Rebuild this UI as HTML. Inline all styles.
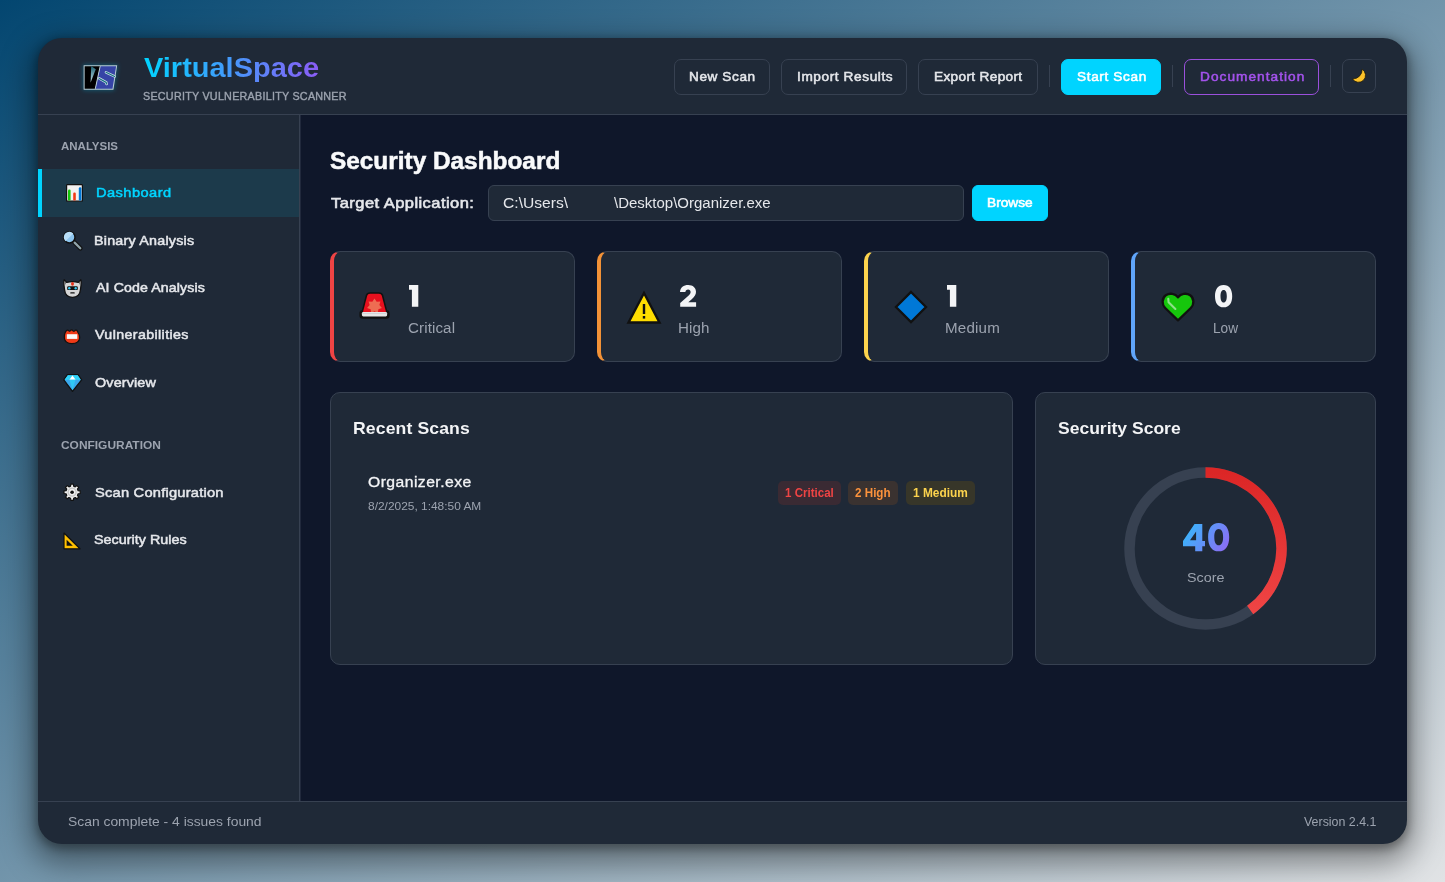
<!DOCTYPE html>
<html><head><meta charset="utf-8">
<style>
html,body{margin:0;padding:0;width:1445px;height:882px;overflow:hidden}
body{background:linear-gradient(to bottom right,#034670 0%,#e1e3e5 100%);font-family:"Liberation Sans",sans-serif;position:relative}
.t{position:absolute;white-space:pre;line-height:1;transform-origin:0 0;font-family:"Liberation Sans",sans-serif}
.abs{position:absolute}
#win{position:absolute;left:38px;top:38px;width:1369px;height:806px;border-radius:24px;background:#1f2937;box-shadow:0 12px 30px 8px rgba(0,0,0,.4),0 3px 8px 2px rgba(0,0,0,.3);overflow:hidden}
#hdr-b{position:absolute;left:38px;top:114px;width:1369px;height:1px;background:#374151}
#side-b{position:absolute;left:299px;top:115px;width:1px;height:686px;background:#374151;box-shadow:1px 0 0 rgba(55,65,81,.45)}
#main{position:absolute;left:300px;top:115px;width:1107px;height:686px;background:#0f172a}
#foot-b{position:absolute;left:38px;top:801px;width:1369px;height:1px;background:#374151}
.btn{position:absolute;box-sizing:border-box;border:1px solid #374151;border-radius:7px;background:#1f2937}
.sep{position:absolute;width:1px;height:22px;top:65px;background:#374151}
.card{position:absolute;box-sizing:border-box;border:1px solid #374151;border-radius:10px;background:#1f2937}
.sc{position:absolute;box-sizing:border-box;border:1px solid #374151;border-left-width:4px;border-radius:10px;background:#1f2937}
.sc .bar{position:absolute;left:0;top:0;bottom:0;width:4px}
.badge{position:absolute;top:481px;height:24px;border-radius:5px}
svg{position:absolute;overflow:visible}
</style></head><body>
<div id="win"></div>
<div id="main"></div>
<div id="hdr-b"></div>
<div id="side-b"></div>
<div id="foot-b"></div>

<!-- logo -->
<svg style="left:83px;top:64px" width="35" height="27" viewBox="0 0 35 27">
  <defs><filter id="glow" x="-50%" y="-50%" width="200%" height="200%"><feGaussianBlur stdDeviation="2"/></filter>
  <linearGradient id="slg" x1="0" y1="0" x2="0" y2="1"><stop offset="0" stop-color="#1a6070"/><stop offset="1" stop-color="#c8e4ea"/></linearGradient></defs>
  <path d="M0,0.5 L35,0.5 L31,26.5 L0,26.5 Z" fill="#0ab0d8" opacity=".35" filter="url(#glow)"/>
  <path d="M0.6,1.2 L34.2,1.2 L30.4,25.8 L0.6,25.8 Z" fill="#b9cdd4"/>
  <path d="M1.6,2.2 L17.2,2.2 L12.3,24.8 L1.6,24.8 Z" fill="#000"/>
  <path d="M17.2,2.2 L33.1,2.2 L29.5,24.8 L12.3,24.8 Z" fill="#3644a6"/>
  <path d="M17.2,2.2 L12.3,24.8" stroke="#b9cdd4" stroke-width="1"/>
  <path d="M8.2,2 L12.8,5.3 L7.6,18.5 Z" fill="url(#slg)"/>
  <path d="M23,8.3 L31.6,12.4" stroke="#cfe0e6" stroke-width="2.6" stroke-linecap="round"/>
  <path d="M23,8.3 L31.6,12.4" stroke="#157080" stroke-width="1.1" stroke-linecap="round"/>
  <path d="M16.2,14.4 L23.2,18.4 L23.6,20" stroke="#cfe0e6" stroke-width="2.6" stroke-linecap="round" fill="none"/>
  <path d="M16.2,14.4 L23.2,18.4 L23.6,20" stroke="#157080" stroke-width="1.1" stroke-linecap="round" fill="none"/>
</svg>

<!-- header buttons -->
<div class="btn" style="left:674px;top:59px;width:96px;height:36px"></div>
<div class="btn" style="left:781px;top:59px;width:126px;height:36px"></div>
<div class="btn" style="left:918px;top:59px;width:120px;height:36px"></div>
<div class="sep" style="left:1049px"></div>
<div class="btn" style="left:1061px;top:59px;width:100px;height:36px;background:#00d4ff;border-color:#00d4ff"></div>
<div class="sep" style="left:1172px"></div>
<div class="btn" style="left:1184px;top:59px;width:135px;height:36px;border:1.5px solid #9b50dc"></div>
<div class="sep" style="left:1330px"></div>
<div class="btn" style="left:1342px;top:59px;width:34px;height:34px"></div>
<!-- moon -->
<svg style="left:1350px;top:67px" width="18" height="18" viewBox="0 0 18 18">
  <path d="M12.2,2.3 A7,7 0 1 1 2.6,12 A9.5,9.5 0 0 0 12.2,2.3 Z" fill="#fcc22a" stroke="#1a1400" stroke-width=".7" stroke-linejoin="round"/>
</svg>

<!-- sidebar active -->
<div class="abs" style="left:38px;top:169px;width:261px;height:48px;background:#1c3a4b"></div>
<div class="abs" style="left:38.3px;top:169px;width:3.6px;height:48px;background:#00d4ff"></div>

<!-- sidebar icons -->
<!-- bar chart -->
<svg style="left:66px;top:184px" width="17" height="18" viewBox="0 0 17 18">
  <rect x=".6" y=".6" width="15.8" height="16.6" rx=".8" fill="#f2f2f2" stroke="#111" stroke-width="1.2"/>
  <rect x="2" y="5.6" width="2.6" height="11" rx="1.2" fill="#16c60c"/>
  <rect x="7.2" y="8.6" width="2.6" height="8" rx="1.2" fill="#f03a17"/>
  <rect x="12.8" y="3.2" width="2.6" height="13.4" rx="1.2" fill="#0078d7"/>
</svg>
<!-- magnifier -->
<svg style="left:62px;top:230px" width="21" height="21" viewBox="0 0 21 21">
  <path d="M12.3,12.3 L18.4,18.4" stroke="#111" stroke-width="4.4" stroke-linecap="round"/>
  <path d="M12.6,12.6 L18.3,18.3" stroke="#8fa3aa" stroke-width="2.2" stroke-linecap="round"/>
  <circle cx="7.4" cy="7.3" r="5.6" fill="#8cc4ee" stroke="#111" stroke-width="1.5"/>
  <path d="M3.4,11.2 A5,5 0 0 1 11.3,3.4 Z" fill="#b8def8"/>
</svg>
<!-- robot -->
<svg style="left:63px;top:279px" width="19" height="19" viewBox="0 0 19 19">
  <path d="M1.2,0.8 L3.6,3.4 Q9.5,1.9 15.4,3.4 L17.8,0.8 Q18.6,2.5 18,6.5 L17.4,11 Q16.8,18 9.5,18.3 Q2.2,18 1.6,11 L1,6.5 Q0.4,2.5 1.2,0.8 Z" fill="#d6d6d6" stroke="#111" stroke-width="1.3" stroke-linejoin="round"/>
  <path d="M1.6,1.8 L3,3.6 L2.2,6 Z M17.4,1.8 L16,3.6 L16.8,6 Z" fill="#555"/>
  <ellipse cx="9.5" cy="4.8" rx="1.5" ry="1.9" fill="#e83018"/>
  <rect x="4.2" y="7.3" width="10.6" height="3.8" rx="1.2" fill="#111"/>
  <circle cx="6.3" cy="9.2" r="1.2" fill="#35c8f5"/>
  <circle cx="12.7" cy="9.2" r="1.2" fill="#35c8f5"/>
  <rect x="7.2" y="13.2" width="4.6" height="1.4" rx=".7" fill="#111"/>
</svg>
<!-- name badge -->
<svg style="left:63px;top:328px" width="18" height="16" viewBox="0 0 18 16">
  <path d="M2.2,4.5 Q3.5,1.5 5.2,2.3 Q6.2,4 7.4,2.6 Q8.6,1 9.8,2.6 Q11,4 12.2,2.3 Q13.8,1.2 15,4.5 Q17.2,7.5 16.7,10 Q16,15.5 9,15.6 Q2,15.5 1.3,10 Q1,7 2.2,4.5 Z" fill="#f03a17" stroke="#111" stroke-width="1.2"/>
  <rect x="3.8" y="6.2" width="10.5" height="4.7" fill="#f8f8f8"/>
</svg>
<!-- gem -->
<svg style="left:63px;top:374px" width="19" height="18" viewBox="0 0 19 18">
  <path d="M4.5,0.7 L15,0.7 L18.6,5.8 L9.5,17.3 L0.8,5.8 Z" fill="#3aa8ec" stroke="#111" stroke-width="1.3" stroke-linejoin="round"/>
  <path d="M4.8,1.3 L14.7,1.3 L17.8,5.8 L1.6,5.8 Z" fill="#30d4fa"/>
  <path d="M9.5,1.6 L12.6,5.8 L6.4,5.8 Z" fill="#fff"/>
  <path d="M6.5,5.8 L12.5,5.8 L9.5,16.3 Z" fill="#30c8f5"/>
</svg>
<!-- gear -->
<svg style="left:63px;top:483px" width="18" height="18" viewBox="-9.1 -9.2 18 18">
  <path d="M-1.28,-8.10 L1.28,-8.10 L1.54,-6.01 L3.16,-5.34 L4.82,-6.63 L6.63,-4.82 L5.34,-3.16 L6.01,-1.54 L8.10,-1.28 L8.10,1.28 L6.01,1.54 L5.34,3.16 L6.63,4.82 L4.82,6.63 L3.16,5.34 L1.54,6.01 L1.28,8.10 L-1.28,8.10 L-1.54,6.01 L-3.16,5.34 L-4.82,6.63 L-6.63,4.82 L-5.34,3.16 L-6.01,1.54 L-8.10,1.28 L-8.10,-1.28 L-6.01,-1.54 L-5.34,-3.16 L-6.63,-4.82 L-4.82,-6.63 L-3.16,-5.34 L-1.54,-6.01 Z" fill="#eeeeee" stroke="#111" stroke-width="1.2" stroke-linejoin="round"/>
  <circle r="4" fill="none" stroke="#c4c4c4" stroke-width="1.2"/>
  <circle r="1.8" fill="#111"/>
</svg>
<!-- triangle ruler -->
<svg style="left:63px;top:532px" width="18" height="18" viewBox="0 0 18 18">
  <path d="M1,1 L17,16.8 L1,16.8 Z" fill="#ffc000" stroke="#111" stroke-width="1.2" stroke-linejoin="round"/>
  <path d="M3.6,7.8 L9.8,13.8 L3.6,13.8 Z" fill="#111"/>
</svg>

<!-- main: input + browse -->
<div class="btn" style="left:488px;top:185px;width:476px;height:36px;border-radius:6px"></div>
<div class="btn" style="left:972px;top:185px;width:76px;height:36px;background:#00d4ff;border-color:#00d4ff;border-radius:6px"></div>

<!-- stat cards -->
<div class="sc" style="left:330px;top:251px;width:245px;height:111px;border-left-color:#ef4444"></div>
<div class="sc" style="left:597px;top:251px;width:245px;height:111px;border-left-color:#f39237"></div>
<div class="sc" style="left:864px;top:251px;width:245px;height:111px;border-left-color:#fcd34d"></div>
<div class="sc" style="left:1131px;top:251px;width:245px;height:111px;border-left-color:#60a5fa"></div>

<!-- siren -->
<svg style="left:360px;top:292px" width="29" height="27" viewBox="0 0 29 27">
  <defs><clipPath id="domeclip"><path d="M7.2,3.8 Q7.8,1.8 10,1.8 L19,1.8 Q21.2,1.8 21.8,3.8 L26,20 L3,20 Z"/></clipPath></defs>
  <path d="M7.2,3.8 Q7.8,1.8 10,1.8 L19,1.8 Q21.2,1.8 21.8,3.8 L25.8,19.6 L26.6,19.6 Q28,19.8 28,21.4 L28,23.6 Q28,25.2 26.4,25.2 L2.6,25.2 Q1,25.2 1,23.6 L1,21.4 Q1,19.8 2.4,19.6 L3.2,19.6 Z" fill="#111" stroke="#111" stroke-width="3.2" stroke-linejoin="round"/>
  <path d="M7.2,3.8 Q7.8,1.8 10,1.8 L19,1.8 Q21.2,1.8 21.8,3.8 L26,20 L3,20 Z" fill="#e8101e"/>
  <path d="M14.50,6.60 L16.67,9.70 L20.44,9.46 L19.37,13.09 L21.91,15.89 L18.41,17.32 L17.80,21.05 L14.50,19.20 L11.20,21.05 L10.59,17.32 L7.09,15.89 L9.63,13.09 L8.56,9.46 L12.33,9.70 Z" fill="#ee6c52" clip-path="url(#domeclip)"/>
  <rect x="1.9" y="19.9" width="25.2" height="4.5" rx="1.4" fill="#e6e6e6"/>
  <rect x="2.2" y="21.3" width="24.6" height=".7" fill="#c9cdd0"/>
</svg>
<!-- warning -->
<svg style="left:627px;top:291px" width="34" height="33" viewBox="0 0 34 33">
  <path d="M17,2 L32.5,31.5 L1.5,31.5 Z" fill="#ffdd00" stroke="#111" stroke-width="2.4" stroke-linejoin="miter"/>
  <rect x="15.8" y="13" width="2.4" height="10" fill="#111"/>
  <rect x="15.8" y="25" width="2.4" height="2.6" fill="#111"/>
</svg>
<!-- blue diamond -->
<svg style="left:894px;top:290px" width="34" height="34" viewBox="0 0 34 34">
  <path d="M17,2 L32,17 L17,32 L2,17 Z" fill="#0078d7" stroke="#111" stroke-width="2.4"/>
</svg>
<!-- green heart -->
<svg style="left:1161px;top:292px" width="34" height="30" viewBox="0 0 34 30">
  <path d="M17,28.3 L4.2,16 C0.6,12.4 0.8,6.2 4.8,3.3 C8.8,0.6 14.2,1.6 17,5.3 C19.8,1.6 25.2,0.6 29.2,3.3 C33.2,6.2 33.4,12.4 29.8,16 Z" fill="#16c60c" stroke="#111" stroke-width="2.3" stroke-linejoin="round"/>
  <path d="M7.3,6.8 L7.6,10.3 L14.4,17" stroke="#8ee08a" stroke-width="2.1" fill="none" stroke-linecap="round" stroke-linejoin="round"/>
</svg>

<!-- recent scans & score cards -->
<div class="card" style="left:330px;top:392px;width:683px;height:273px"></div>
<div class="card" style="left:1035px;top:392px;width:341px;height:273px"></div>
<div class="badge" style="left:778px;width:63px;background:#3a2a33"></div>
<div class="badge" style="left:848px;width:50px;background:#3a3230"></div>
<div class="badge" style="left:906px;width:69px;background:#373629"></div>

<!-- score ring -->
<svg style="left:1124px;top:467px" width="163" height="163" viewBox="0 0 163 163">
  <defs><linearGradient id="rg" gradientUnits="userSpaceOnUse" x1="0" y1="5" x2="0" y2="143"><stop offset="0" stop-color="#dc2626"/><stop offset="1" stop-color="#ef4444"/></linearGradient></defs>
  <circle cx="81.5" cy="81.5" r="76" fill="none" stroke="#374151" stroke-width="10.5"/>
  <path d="M81.5,5.5 A76,76 0 0 1 126.17,142.98" fill="none" stroke="url(#rg)" stroke-width="10.5"/>
</svg>

<!-- digits -->
<svg style="left:408.5px;top:285px" width="10" height="22" viewBox="0 0 10 22"><path d="M0,0.1 L9.3,0.1 L9.3,21.8 L2.9,21.8 L2.9,4.8 L0,4.8 Z" fill="#f3f4f6"/></svg>
<svg style="left:680px;top:285px" width="17" height="22" viewBox="0 0 17 22"><path d="M0,7 C0.3,2.5 3.6,0 8.2,0 C13,0 16,2.9 16,6.8 C16,9.5 14.6,11.6 12,14 L8.3,17.2 L16.1,17.2 L16.1,21.8 L0.2,21.8 L0.2,17.9 L8.4,10.8 C10,9.4 10.6,8.3 10.6,7.1 C10.6,5.4 9.6,4.5 8.1,4.5 C6.5,4.5 5.5,5.5 5.4,7 Z" fill="#f3f4f6"/></svg>
<svg style="left:946.6px;top:285px" width="10" height="22" viewBox="0 0 10 22"><path d="M0,0.1 L9.3,0.1 L9.3,21.8 L2.9,21.8 L2.9,4.8 L0,4.8 Z" fill="#f3f4f6"/></svg>
<svg style="left:1214.7px;top:284.7px" width="18" height="23" viewBox="0 0 18 23"><path fill-rule="evenodd" d="M8.6,0 C14.4,0 17.2,4.6 17.2,11.15 C17.2,17.7 14.4,22.3 8.6,22.3 C2.8,22.3 0,17.7 0,11.15 C0,4.6 2.8,0 8.6,0 Z M8.65,4.9 C6.5,4.9 5.5,7.3 5.5,11.15 C5.5,15 6.5,17.4 8.65,17.4 C10.8,17.4 11.8,15 11.8,11.15 C11.8,7.3 10.8,4.9 8.65,4.9 Z" fill="#f3f4f6"/></svg>
<svg style="left:1182.6px;top:522.6px" width="47" height="29" viewBox="0 0 47 29">
  <defs><linearGradient id="g40" gradientUnits="userSpaceOnUse" x1="0" y1="0" x2="46" y2="28"><stop offset="0" stop-color="#2ebefc"/><stop offset="1" stop-color="#9168f4"/></linearGradient></defs>
  <path fill-rule="evenodd" d="M11.5,0.9 L19.3,0.9 L19.3,18.1 L22,18.1 L22,23.3 L19.3,23.3 L19.3,28.3 L12.2,28.3 L12.2,23.3 L0,23.3 L0,18 Z M7,17.2 L13.1,8.4 L13.1,17.2 Z" fill="url(#g40)"/>
  <path fill-rule="evenodd" d="M35.65,0 C42.6,0 46.2,5.6 46.2,14.15 C46.2,22.7 42.6,28.3 35.65,28.3 C28.7,28.3 25.1,22.7 25.1,14.15 C25.1,5.6 28.7,0 35.65,0 Z M35.7,6.1 C32.9,6.1 31.3,9 31.3,14.15 C31.3,19.3 32.9,22.2 35.7,22.2 C38.5,22.2 40.1,19.3 40.1,14.15 C40.1,9 38.5,6.1 35.7,6.1 Z" fill="url(#g40)"/>
</svg>

<div class="t" id="t_brand" style="left:143.80px;top:53.62px;font-size:28.01px;font-weight:700;letter-spacing:0.000px;background:linear-gradient(90deg,#00d4ff,#8b5cf6);-webkit-background-clip:text;background-clip:text;color:transparent;transform:scaleX(1.0351);">VirtualSpace</div>
<div class="t" id="t_sub" style="left:143.32px;top:90.50px;font-size:11.20px;font-weight:400;letter-spacing:0.272px;color:#9ca3af;-webkit-text-stroke:0.40px currentColor;transform:scaleX(0.9600);">SECURITY VULNERABILITY SCANNER</div>
<div class="t" id="t_b1" style="left:688.70px;top:70.53px;font-size:12.39px;font-weight:400;letter-spacing:0.527px;color:#e5e7eb;-webkit-text-stroke:0.50px currentColor;transform:scaleX(1.1000);">New Scan</div>
<div class="t" id="t_b2" style="left:796.59px;top:70.58px;font-size:12.41px;font-weight:400;letter-spacing:0.536px;color:#e5e7eb;-webkit-text-stroke:0.50px currentColor;transform:scaleX(1.1000);">Import Results</div>
<div class="t" id="t_b3" style="left:933.80px;top:70.53px;font-size:12.39px;font-weight:400;letter-spacing:0.316px;color:#e5e7eb;-webkit-text-stroke:0.50px currentColor;transform:scaleX(1.1000);">Export Report</div>
<div class="t" id="t_b4" style="left:1076.75px;top:70.53px;font-size:12.39px;font-weight:400;letter-spacing:0.575px;color:#ffffff;-webkit-text-stroke:0.50px currentColor;transform:scaleX(1.1000);">Start Scan</div>
<div class="t" id="t_b5" style="left:1199.60px;top:70.58px;font-size:12.41px;font-weight:400;letter-spacing:0.945px;color:#a453ec;-webkit-text-stroke:0.50px currentColor;transform:scaleX(1.1000);">Documentation</div>
<div class="t" id="t_s1" style="left:60.90px;top:139.60px;font-size:11.63px;font-weight:700;letter-spacing:0.000px;color:#9ca3af;transform:scaleX(0.9882);">ANALYSIS</div>
<div class="t" id="t_n1" style="left:95.90px;top:185.52px;font-size:13.32px;font-weight:400;letter-spacing:0.400px;color:#00d4ff;-webkit-text-stroke:0.50px currentColor;transform:scaleX(1.1000);">Dashboard</div>
<div class="t" id="t_n2" style="left:94.40px;top:233.54px;font-size:13.03px;font-weight:400;letter-spacing:0.200px;color:#e5e7eb;-webkit-text-stroke:0.50px currentColor;transform:scaleX(1.1000);">Binary Analysis</div>
<div class="t" id="t_n3" style="left:95.70px;top:281.53px;font-size:12.90px;font-weight:400;letter-spacing:0.093px;color:#e5e7eb;-webkit-text-stroke:0.50px currentColor;transform:scaleX(1.1000);">AI Code Analysis</div>
<div class="t" id="t_n4" style="left:94.90px;top:328.53px;font-size:12.95px;font-weight:400;letter-spacing:0.348px;color:#e5e7eb;-webkit-text-stroke:0.50px currentColor;transform:scaleX(1.1000);">Vulnerabilities</div>
<div class="t" id="t_n5" style="left:95.04px;top:375.56px;font-size:13.09px;font-weight:400;letter-spacing:0.118px;color:#e5e7eb;-webkit-text-stroke:0.50px currentColor;transform:scaleX(1.1000);">Overview</div>
<div class="t" id="t_s2" style="left:60.58px;top:439.51px;font-size:11.46px;font-weight:700;letter-spacing:0.000px;color:#9ca3af;transform:scaleX(1.0418);">CONFIGURATION</div>
<div class="t" id="t_n6" style="left:95.04px;top:485.60px;font-size:13.38px;font-weight:400;letter-spacing:0.182px;color:#e5e7eb;-webkit-text-stroke:0.50px currentColor;transform:scaleX(1.1000);">Scan Configuration</div>
<div class="t" id="t_n7" style="left:93.65px;top:532.53px;font-size:13.04px;font-weight:400;letter-spacing:0.018px;color:#e5e7eb;-webkit-text-stroke:0.50px currentColor;transform:scaleX(1.1000);">Security Rules</div>
<div class="t" id="t_h1" style="left:330.06px;top:149.57px;font-size:23.00px;font-weight:700;letter-spacing:0.000px;color:#f9fafb;-webkit-text-stroke:0.50px currentColor;transform:scaleX(1.0598);">Security Dashboard</div>
<div class="t" id="t_lab" style="left:330.67px;top:194.58px;font-size:15.00px;font-weight:400;letter-spacing:0.408px;color:#e5e7eb;-webkit-text-stroke:0.60px currentColor;transform:scaleX(1.1000);">Target Application:</div>
<div class="t" id="t_in1" style="left:503.25px;top:195.52px;font-size:14.59px;font-weight:400;letter-spacing:0.000px;color:#e5e7eb;transform:scaleX(1.0726);">C:\Users\</div>
<div class="t" id="t_in2" style="left:614.00px;top:195.53px;font-size:14.83px;font-weight:400;letter-spacing:0.000px;color:#e5e7eb;transform:scaleX(1.0109);">\Desktop\Organizer.exe</div>
<div class="t" id="t_brw" style="left:986.89px;top:195.56px;font-size:13.60px;font-weight:400;letter-spacing:0.000px;color:#ffffff;-webkit-text-stroke:0.60px currentColor;transform:scaleX(1.0072);">Browse</div>
<div class="t" id="t_c1l" style="left:407.94px;top:321.51px;font-size:13.77px;font-weight:400;letter-spacing:0.094px;color:#9ca3af;transform:scaleX(1.1000);">Critical</div>
<div class="t" id="t_c2l" style="left:678.39px;top:321.55px;font-size:13.77px;font-weight:400;letter-spacing:0.062px;color:#9ca3af;transform:scaleX(1.1000);">High</div>
<div class="t" id="t_c3l" style="left:945.39px;top:321.55px;font-size:13.77px;font-weight:400;letter-spacing:0.182px;color:#9ca3af;transform:scaleX(1.1000);">Medium</div>
<div class="t" id="t_c4l" style="left:1212.91px;top:321.51px;font-size:13.77px;font-weight:400;letter-spacing:0.000px;color:#9ca3af;transform:scaleX(0.9911);">Low</div>
<div class="t" id="t_rs" style="left:352.50px;top:419.60px;font-size:16.03px;font-weight:700;letter-spacing:0.102px;color:#f3f4f6;transform:scaleX(1.1000);">Recent Scans</div>
<div class="t" id="t_on" style="left:368.04px;top:474.55px;font-size:14.29px;font-weight:400;letter-spacing:0.410px;color:#f3f4f6;-webkit-text-stroke:0.30px currentColor;transform:scaleX(1.1000);">Organizer.exe</div>
<div class="t" id="t_od" style="left:368.19px;top:499.53px;font-size:11.70px;font-weight:400;letter-spacing:0.000px;color:#9ca3af;transform:scaleX(1.0196);">8/2/2025, 1:48:50 AM</div>
<div class="t" id="t_bg1" style="left:784.92px;top:487.59px;font-size:11.85px;font-weight:700;letter-spacing:0.000px;color:#ef4444;transform:scaleX(0.9760);">1 Critical</div>
<div class="t" id="t_bg2" style="left:855.21px;top:487.59px;font-size:11.85px;font-weight:700;letter-spacing:0.000px;color:#fb923c;transform:scaleX(0.9838);">2 High</div>
<div class="t" id="t_bg3" style="left:912.50px;top:487.53px;font-size:11.85px;font-weight:700;letter-spacing:0.000px;color:#fcd34d;transform:scaleX(1.0035);">1 Medium</div>
<div class="t" id="t_ss" style="left:1057.98px;top:420.54px;font-size:16.89px;font-weight:700;letter-spacing:0.000px;color:#f3f4f6;transform:scaleX(1.0376);">Security Score</div>
<div class="t" id="t_sc" style="left:1186.76px;top:570.51px;font-size:13.40px;font-weight:400;letter-spacing:0.000px;color:#9ca3af;transform:scaleX(1.0693);">Score</div>
<div class="t" id="t_f1" style="left:67.86px;top:815.59px;font-size:12.82px;font-weight:400;letter-spacing:0.000px;color:#9ca3af;transform:scaleX(1.0826);">Scan complete - 4 issues found</div>
<div class="t" id="t_f2" style="left:1304.00px;top:815.62px;font-size:12.89px;font-weight:400;letter-spacing:0.000px;color:#9ca3af;transform:scaleX(0.9643);">Version 2.4.1</div>
</body></html>
